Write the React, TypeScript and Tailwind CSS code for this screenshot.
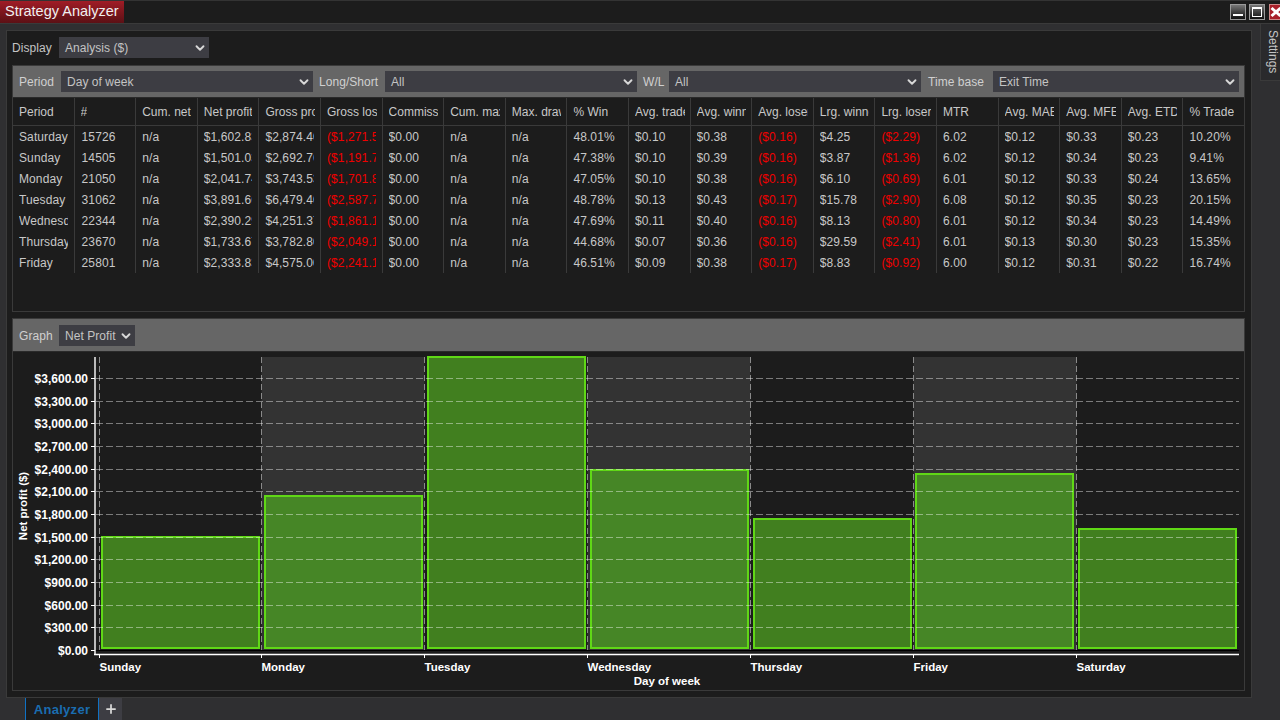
import { ChevronDown, Plus } from 'lucide-react';

const headers = [
  'Period', '#', 'Cum. net', 'Net profit', 'Gross profit', 'Gross loss', 'Commission', 'Cum. max', 'Max. drawdown', '% Win',
  'Avg. trade', 'Avg. winner', 'Avg. loser', 'Lrg. winner', 'Lrg. loser', 'MTR', 'Avg. MAE', 'Avg. MFE', 'Avg. ETD', '% Trade',
];

const rows = [
  ['Saturday', '15726', 'n/a', '$1,602.83', '$2,874.40', '($1,271.57)', '$0.00', 'n/a', 'n/a', '48.01%', '$0.10', '$0.38', '($0.16)', '$4.25', '($2.29)', '6.02', '$0.12', '$0.33', '$0.23', '10.20%'],
  ['Sunday', '14505', 'n/a', '$1,501.03', '$2,692.76', '($1,191.73)', '$0.00', 'n/a', 'n/a', '47.38%', '$0.10', '$0.39', '($0.16)', '$3.87', '($1.36)', '6.02', '$0.12', '$0.34', '$0.23', '9.41%'],
  ['Monday', '21050', 'n/a', '$2,041.74', '$3,743.53', '($1,701.81)', '$0.00', 'n/a', 'n/a', '47.05%', '$0.10', '$0.38', '($0.16)', '$6.10', '($0.69)', '6.01', '$0.12', '$0.33', '$0.24', '13.65%'],
  ['Tuesday', '31062', 'n/a', '$3,891.66', '$6,479.40', '($2,587.74)', '$0.00', 'n/a', 'n/a', '48.78%', '$0.13', '$0.43', '($0.17)', '$15.78', '($2.90)', '6.08', '$0.12', '$0.35', '$0.23', '20.15%'],
  ['Wednesday', '22344', 'n/a', '$2,390.29', '$4,251.37', '($1,861.10)', '$0.00', 'n/a', 'n/a', '47.69%', '$0.11', '$0.40', '($0.16)', '$8.13', '($0.80)', '6.01', '$0.12', '$0.34', '$0.23', '14.49%'],
  ['Thursday', '23670', 'n/a', '$1,733.67', '$3,782.80', '($2,049.13)', '$0.00', 'n/a', 'n/a', '44.68%', '$0.07', '$0.36', '($0.16)', '$29.59', '($2.41)', '6.01', '$0.13', '$0.30', '$0.23', '15.35%'],
  ['Friday', '25801', 'n/a', '$2,333.83', '$4,575.00', '($2,241.17)', '$0.00', 'n/a', 'n/a', '46.51%', '$0.09', '$0.38', '($0.17)', '$8.83', '($0.92)', '6.00', '$0.12', '$0.31', '$0.22', '16.74%'],
];

const yTicks = [3600, 3300, 3000, 2700, 2400, 2100, 1800, 1500, 1200, 900, 600, 300, 0];
const yOf = (v: number) => Math.round(650 - (v / 3600) * 272);

const bars = [
  { day: 'Sunday', x: 99.5, left: 101, top: 537, fill: '#417f1f', band: false },
  { day: 'Monday', x: 261.5, left: 264, top: 496, fill: '#468626', band: true },
  { day: 'Tuesday', x: 424.5, left: 427, top: 357, fill: '#417f1f', band: false },
  { day: 'Wednesday', x: 587.5, left: 590, top: 470, fill: '#468626', band: true },
  { day: 'Thursday', x: 750.5, left: 753, top: 519, fill: '#417f1f', band: false },
  { day: 'Friday', x: 913.5, left: 915, top: 474, fill: '#468626', band: true },
  { day: 'Saturday', x: 1076.5, left: 1078, top: 529, fill: '#417f1f', band: false },
];

function Select({ label, className }: { label: string; className: string }) {
  return (
    <div className={`flex h-[21px] shrink-0 items-center justify-between whitespace-nowrap bg-[#3d3d43] pl-[6px] pr-[2px] text-[12px] tracking-[0.05px] text-[#c4c4c4] ${className}`}>
      <span>{label}</span>
      <ChevronDown className="size-[14px] shrink-0 text-[#d8d8d8]" strokeWidth={3.2} />
    </div>
  );
}

function Chart() {
  return (
    <svg viewBox="13 352 1231 338" className="block h-[338px] w-[1231px] shrink-0">
      {bars.filter((b) => b.band).map((b) => (
        <rect key={b.day} x={b.x} y={357} width={163} height={293} fill="#333333" />
      ))}
      {bars.map((b) => (
        <line key={b.day} x1={b.x} x2={b.x} y1={357} y2={653} stroke="#8a8a8a" strokeDasharray="6 3" />
      ))}
      {bars.map((b) => (
        <rect
          key={b.day}
          x={b.left + 1}
          y={b.top}
          width={157}
          height={648 - b.top}
          fill={b.fill}
          stroke="#60d816"
          strokeWidth={2}
        />
      ))}
      {yTicks.filter((v) => v > 0).map((v) => (
        <line key={v} x1={96} x2={1239} y1={yOf(v) + 0.5} y2={yOf(v) + 0.5} stroke="#ffffff" strokeOpacity={0.42} strokeDasharray="7 3" />
      ))}
      <line x1={96} x2={1239} y1={650.5} y2={650.5} stroke="#000000" />
      <line x1={95} x2={95} y1={357} y2={655} stroke="#ffffff" strokeWidth={1.4} />
      <line x1={94} x2={1239} y1={654.5} y2={654.5} stroke="#ffffff" strokeWidth={1.4} />
      {yTicks.map((v) => (
        <g key={v}>
          <line x1={91} x2={95} y1={yOf(v) + 0.5} y2={yOf(v) + 0.5} stroke="#ffffff" />
          <text x={88} y={yOf(v) + 5} textAnchor="end" className="fill-white text-[12px] font-bold">
            {'$' + v.toLocaleString('en-US') + '.00'}
          </text>
        </g>
      ))}
      {bars.map((b) => (
        <g key={b.day}>
          <line x1={b.x} x2={b.x} y1={654} y2={658} stroke="#ffffff" />
          <text x={b.x} y={671} className="fill-white text-[11.5px] font-bold">{b.day}</text>
        </g>
      ))}
      <text x={667} y={685} textAnchor="middle" className="fill-white text-[11.5px] font-bold">Day of week</text>
      <text transform="translate(27 506) rotate(-90)" textAnchor="middle" className="fill-white text-[11.5px] font-bold">Net profit ($)</text>
    </svg>
  );
}

export default function App() {
  return (
    <div className="flex h-[720px] w-[1280px] flex-col overflow-hidden bg-[#2f2f31] [font-family:Liberation_Sans,Arial,sans-serif]">
      <div className="flex h-[24px] shrink-0 items-stretch justify-between border-y border-t-[#333333] border-b-[#3a3a3a] bg-[#1c1c1c]">
        <div className="flex w-[124px] items-center whitespace-nowrap bg-gradient-to-b from-[#a01c26] to-[#5c1015] pl-[5px] text-[14.5px] text-[#f0f0f0]">
          Strategy Analyzer
        </div>
        <div className="flex items-center gap-[3px]">
          <div className="flex h-[16px] w-[16px] items-end justify-center border border-[#9a9a9a] bg-gradient-to-b from-[#777777] to-[#111111] pb-[3px]">
            <div className="h-[2px] w-[10px] bg-white" />
          </div>
          <div className="flex h-[16px] w-[16px] items-center justify-center border border-[#9a9a9a] bg-gradient-to-b from-[#777777] to-[#111111]">
            <div className="h-[10px] w-[10px] border border-t-2 border-white" />
          </div>
          <div className="ml-[1px] flex h-[16px] w-[11px] items-center overflow-hidden border-y border-l border-[#cc8888] bg-[#a8202a]">
            <svg viewBox="0 0 12 12" className="size-[12px] shrink-0">
              <path d="M1.5 2 L10.5 10 M10.5 2 L1.5 10" stroke="#ffffff" strokeWidth={3} />
            </svg>
          </div>
        </div>
      </div>

      <div className="flex h-[674px] shrink-0">
        <div className="ml-[6px] mt-[6px] flex h-[668px] w-[1246px] flex-col border border-[#3a3a3a] bg-[#1c1c1c] pl-[5px]">
          <div className="mt-[6px] flex h-[21px] items-center gap-[6px] text-[12px] tracking-[0.05px] text-[#c4c4c4]">
            <span className="w-[41px]">Display</span>
            <Select label="Analysis ($)" className="w-[150px]" />
          </div>

          <div className="mt-[7px] flex h-[247px] w-[1233px] flex-col overflow-hidden border border-[#3a3a3a]">
            <div className="flex h-[32px] shrink-0 items-center gap-[6px] border-b border-[#2a2a2a] bg-[#666666] pl-[6px] text-[12px] tracking-[0.05px] text-[#d0d0d0]">
              <span className="w-[36px] whitespace-nowrap">Period</span>
              <Select label="Day of week" className="w-[252px]" />
              <span className="w-[60px] whitespace-nowrap">Long/Short</span>
              <Select label="All" className="w-[252px]" />
              <span className="w-[20px] whitespace-nowrap">W/L</span>
              <Select label="All" className="w-[252px]" />
              <span className="w-[60px] whitespace-nowrap pl-[1px]">Time base</span>
              <Select label="Exit Time" className="w-[246px]" />
            </div>
            <div className="grid h-[28px] w-[1232px] shrink-0 grid-cols-[repeat(20,minmax(0,1fr))] border-b border-[#3a3a3a] text-[12px] text-[#c8c8c8]">
              {headers.map((h) => (
                <div key={h} className="flex min-w-0 items-center border-r border-[#3a3a3a] pl-[6px] pr-[5px]">
                  <span className="overflow-hidden whitespace-nowrap">{h}</span>
                </div>
              ))}
            </div>
            <div className="grid h-[147px] w-[1232px] grid-cols-[repeat(20,minmax(0,1fr))] text-[12px] tracking-[0.1px] text-[#c8c8c8]">
              {headers.map((h, c) => (
                <div key={h} className="flex min-w-0 flex-col border-r border-[#3a3a3a] pl-[6px] pr-[6px]">
                  {rows.map((r) => {
                    const red = r[c].startsWith('(');
                    return (
                      <div key={r[0]} className={`flex h-[21px] shrink-0 items-center overflow-hidden whitespace-nowrap ${red ? 'text-[#f00000]' : ''} ${c === 1 ? 'pl-[1px]' : ''}`}>
                        {r[c]}
                      </div>
                    );
                  })}
                </div>
              ))}
            </div>
          </div>

          <div className="mt-[6px] flex h-[373px] w-[1233px] flex-col border border-[#3a3a3a]">
            <div className="flex h-[33px] shrink-0 items-center gap-[6px] border-b border-[#2a2a2a] bg-[#666666] pl-[6px] text-[12px] tracking-[0.05px] text-[#d0d0d0]">
              <span className="mt-[1px] w-[34px]">Graph</span>
              <Select label="Net Profit" className="w-[76px] pt-[1px]" />
            </div>
            <Chart />
          </div>
        </div>

        <div className="ml-[8px] flex h-[57px] w-[20px] justify-start border-b border-l border-[#3a3a3a] bg-[#2a2a2c] pt-[6px] text-[12px] leading-[14px] text-[#c4c4c4] [writing-mode:vertical-rl]">
          Settings
        </div>
      </div>

      <div className="flex h-[22px] shrink-0 items-stretch pl-[25px]">
        <div className="flex w-[74px] items-center justify-center border-x border-[#1072c4] bg-[#1c1c1c] pt-[1px] text-[13px] font-bold tracking-[0.3px] text-[#1a6db0]">
          Analyzer
        </div>
        <div className="flex w-[23px] items-center justify-center bg-[#3d3d43] text-[#d8d8d8]">
          <Plus className="size-[14px]" strokeWidth={3} />
        </div>
      </div>
    </div>
  );
}
